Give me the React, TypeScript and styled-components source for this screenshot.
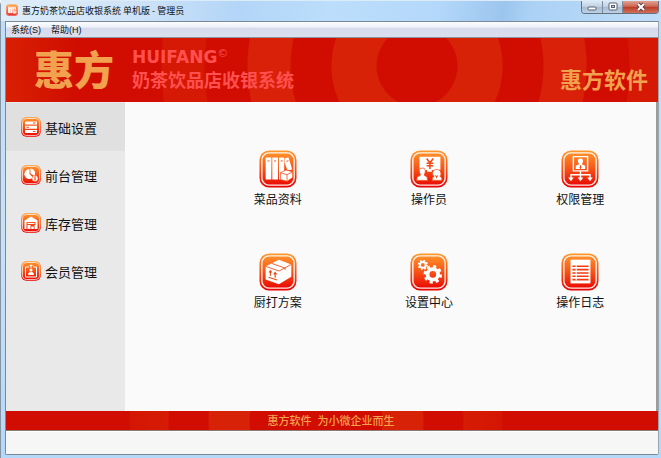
import React, { useId, useState } from "react";
import styled, { createGlobalStyle } from "styled-components";

const GlobalStyle = createGlobalStyle`
  *, *::before, *::after { box-sizing: border-box; }
  body {
    margin: 0;
    font-family: "Liberation Sans", "Noto Sans CJK SC", sans-serif;
    color: #111;
  }
  button { font: inherit; color: inherit; border: 0; padding: 0; background: none; cursor: pointer; }
`;

const Frame = styled.div`
  min-height: 100vh;
  display: flex;
  flex-direction: column;
  padding: 0 2px 3px 4px;
  border-left: 1px solid #8795a3;
  border-radius: 5px 5px 0 0;
  background: linear-gradient(#bcdcfa, #c6e2fb 50%, #b4d8fa);
`;

const TitleBar = styled.header`
  display: flex;
  align-items: flex-start;
  height: 21px;
  margin: 0 -2px 0 -4px;
  padding: 0 2px 0 5px;
  border-top: 1px solid #dcebf8;
  background: linear-gradient(100deg, #dfedf9 0%, #cfe3f7 20%, #b3d5f7 36%, #bcdefc 50%, #b4d8fa 66%, #9cc5ee 76%, #abd1f5 80%, #c0def8 100%);
`;

const Title = styled.h1`
  flex: 1;
  display: flex;
  align-items: center;
  gap: 4px;
  height: 18px;
  margin: 0;
  font-family: "Noto Sans CJK SC", sans-serif;
  font-size: 9px;
  font-weight: 400;
  white-space: pre;
`;

const WindowButtons = styled.div`
  display: flex;
  height: 13px;
  border: 1px solid #66717e;
  border-top: 0;
  border-radius: 0 0 4px 4px;
  overflow: hidden;
`;

const WindowButton = styled.button<{ $close?: boolean }>`
  display: grid;
  place-items: center;
  width: ${(p) => (p.$close ? 36 : 20)}px;
  background: ${(p) =>
    p.$close
      ? "linear-gradient(#e0a294, #cf6753 45%, #bb3c25 50%, #d0705a)"
      : "linear-gradient(#dce8f4, #c3d3e4 45%, #a5bbd1 50%, #bdd2e8)"};
  & + & { border-left: 1px solid #7d8b9a; }
`;

const Client = styled.div`
  flex: 1;
  display: flex;
  flex-direction: column;
  border: 1px solid #7c8894;
  border-right-color: #9aa5b0;
  border-radius: 0 0 2px 2px;
  background: #f5f5f5;
`;

const MenuBar = styled.nav`
  display: flex;
  align-items: center;
  gap: 10px;
  height: 16px;
  padding: 0 5px;
  font-size: 9px;
  line-height: 14px;
  border-bottom: 1px solid #8d939c;
  background: linear-gradient(#fafcff, #eef1f8 35%, #d5daec 40%, #dbe0f0);
`;

const Banner = styled.section`
  display: flex;
  align-items: center;
  height: 64px;
  padding: 0 10px 0 28px;
  background:
    radial-gradient(circle at 411px 28px,
      #d00d00 40px, #d82208 41px, #d82208 85px, #d00d00 86px, #d00d00 126px,
      #d82108 127px, #d82108 169px, #d00d00 170px, #d00d00 212px,
      #d51904 213px, #d51904 255px, #d00d00 256px, #d00d00 340px, #d81f03 410px);
`;

const Brand = styled.div`
  font-family: "Noto Sans CJK SC", sans-serif;
  font-size: 40px;
  line-height: 48px;
  padding-bottom: 4px;
  font-weight: 900;
  color: #f2a14e;
`;

const Product = styled.div`
  flex: 1;
  margin-left: 18px;
  padding-bottom: 2px;
  color: #ff5050;
  white-space: nowrap;
`;

const Latin = styled.div`
  display: flex;
  font: bold 17px/20px "DejaVu Sans", sans-serif;
  small { font-size: 11px; line-height: 14px; font-weight: 400; }
`;

const ProductName = styled.div`
  font: bold 18px/24px "Noto Sans CJK SC", sans-serif;
`;

const Company = styled.div`
  align-self: flex-end;
  padding-bottom: 8px;
  font: bold 22px/32px "Noto Sans CJK SC", sans-serif;
  color: #f2a14e;
  white-space: nowrap;
`;

const Body = styled.div`
  flex: 1;
  display: flex;
  border-right: 2px solid #9c9c9c;
  background: #fafafa;
`;

const Sidebar = styled.nav`
  width: 119px;
  padding-top: 1px;
  background: #e9e9e9;
`;

const SideItem = styled.button<{ $active: boolean }>`
  display: flex;
  align-items: center;
  gap: 4px;
  width: 100%;
  height: 48px;
  padding-left: 15px;
  font-size: 13px;
  background: ${(p) => (p.$active ? "#e0e0e0" : "transparent")};
`;

const Tiles = styled.main`
  flex: 1;
  display: grid;
  grid-template-columns: repeat(3, 1fr);
  grid-auto-rows: 103px;
  padding: 48px 0 0 77px;
`;

const Tile = styled.button`
  display: flex;
  flex-direction: column;
  align-items: center;
  gap: 3px;
  font-size: 12px;
  line-height: 18px;
`;

const Slogan = styled.footer`
  display: flex;
  justify-content: center;
  gap: 6px;
  height: 20px;
  padding-right: 2px;
  font-size: 11px;
  font-weight: 500;
  line-height: 20px;
  color: #f2a14e;
  border-bottom: 1px solid #8a7a76;
  background: radial-gradient(circle at 310px 10px,
    #d00d00 66px, #d82208 67px, #d82208 107px, #d00d00 108px, #d00d00 147px,
    #d61c05 148px, #d41502 186px, #d00d00 187px, #d00d00 360px);
`;

const StatusBar = styled.div`
  height: 23px;
  border-top: 1px solid #fff;
  background: #f6f6f6;
`;

const Glyph = styled.svg`
  display: block;
  flex: none;
`;

function Badge({ size, children }: { size: number; children: React.ReactNode }) {
  const id = useId();
  return (
    <Glyph width={size} height={size} viewBox="0 0 40 40" aria-hidden="true">
      <defs>
        <linearGradient id={id} x1="0" y1="0" x2="0" y2="1">
          <stop offset="0" stopColor="#ff9a2e" />
          <stop offset=".5" stopColor="#f85216" />
          <stop offset="1" stopColor="#e60000" />
        </linearGradient>
      </defs>
      <rect x=".5" y=".5" width="39" height="39" rx="10" fill={`url(#${id})`} />
      <rect x="3" y="3" width="34" height="34" rx="7.5" fill="none" stroke="#fff" strokeWidth="1.5" strokeOpacity=".9" />
      {children}
    </Glyph>
  );
}

const red = "#f04a14";

const drawings: Record<string, React.ReactNode> = {
  books: (
    <g fill="#fff">
      <path d="M7 8h6v23H7zM14 8h6v23h-6zM21 8h5.500v23H21zM27 9l4-1.500 4 13-5 1-3-8z" />
      <path d="M9 11.500h2M16 11.500h2M23 11.500h2M29 12l2-.700" stroke={red} strokeWidth="1" />
      <path d="M22.500 24l6-3 7 2v6l-6 4-7-2z" stroke={red} strokeWidth=".8" />
      <path d="M22.500 24l7 2 6-3M29.500 26v7" fill="none" stroke={red} strokeWidth=".8" />
    </g>
  ),
  operator: (
    <g fill="#fff">
      <path d="M10 7h22v14H10zM18 21h5v2h-5z" />
      <path d="M17.500 9l3.500 4.500L24.500 9M21 13.500V20M17.500 14h7M17.500 16.500h7" fill="none" stroke={red} strokeWidth="1.600" />
      <g stroke={red} strokeWidth=".8">
        <path d="M13 19c-3 0-3.500 2-3 4.500.3 1.200 1 2 1 3L7.500 28.500 7 32h11.500L18 28.500 15 26.500c0-1 .8-2 1-3 .5-2.500 0-4.500-3-4.500z" />
        <path d="M28 20.500c-4 0-4.500 3-4 6l1.500 1-2 2V32h10v-2.500l-2-2 1-1c.5-3-.5-6-4.500-6z" />
      </g>
      <path d="M26 26q2 2 4 0l-2 4z" fill={red} />
    </g>
  ),
  rights: (
    <g fill="none" stroke="#fff" strokeWidth="1.500">
      <path d="M13 7h15v15H13zM20.500 22v9M10.500 30v-4h20v4" />
      <path d="M20.500 9c-2.500 0-3 1.500-2.500 3.500.2 1 1 1.500 1 2.500L15.500 16.500V20h10v-3.500L22 15c0-1 .8-1.500 1-2.500.5-2 0-3.500-2.500-3.500z" fill="#fff" stroke="none" />
      <path d="M7.500 29h6l-3 4zM17.500 29h6l-3 4zM27.500 29h6l-3 4z" fill="#fff" stroke="none" />
      <path d="M20 16l-.5 3 1 1 1-1-.5-3z" fill={red} stroke="none" />
    </g>
  ),
  box: (
    <g>
      <path d="M7 14l14-7 13 5v13l-13 8-14-5z" fill="#fff" />
      <path d="M7 14l14 5 13-7M13.500 11l14 5v2" fill="none" stroke={red} strokeWidth=".9" />
      <path d="M12 24v-5m-1.500 1.500L12 18.500l1.500 2M17 26v-5m-1.500 1.500l1.500-2 1.500 2M10 25.500l9 3" fill="none" stroke={red} strokeWidth="1.200" />
    </g>
  ),
  gears: (
    <g fill="none" stroke="#fff">
      <circle cx="13.500" cy="12.500" r="3" strokeWidth="2" />
      <circle cx="13.500" cy="12.500" r="4.400" strokeWidth="2" strokeDasharray="1.730 1.730" />
      <circle cx="24" cy="22.500" r="5.500" strokeWidth="4" />
      <circle cx="24" cy="22.500" r="8" strokeWidth="3.500" strokeDasharray="3.140 3.140" />
    </g>
  ),
  log: (
    <g>
      <path d="M10 7h21v25H10z" fill="#fff" />
      <path d="M12 14h17M12 17.500h17M12 21h17M12 24.500h17M12 28h17" stroke="#f23c10" strokeWidth="1.700" />
      <path d="M16 13v16" stroke="#fff" strokeWidth="1.200" />
    </g>
  ),
  settings: (
    <g fill="#fff">
      <path d="M8 9h24v6H8zM8 17.500h24v6H8zM8 26h24v6H8z" />
      <path d="M24 12h5M11 20.500h5M24 29h5" stroke={red} strokeWidth="2" />
    </g>
  ),
  front: (
    <g fill="#fff">
      <path d="M17 8a10 10 0 1 0 7 17l-7-7zM19 7v10l8 5c4-7-1-15-8-15z" />
      <circle cx="28" cy="27" r="6" stroke={red} strokeWidth="1" />
      <path d="M30 24.500c-4-2-5 2-2 2.500s2 4-2 2.500M28 23v8" fill="none" stroke={red} strokeWidth="1.300" />
    </g>
  ),
  stock: (
    <g fill="#fff">
      <path d="M7 15l13-8 13 8v17h-4V18H11v14H7z" />
      <path d="M13 20h14v2H13zM13 24h6v8h-6zM20.500 27h5v5h-5zM27 24h3v8h-3z" />
    </g>
  ),
  member: (
    <g fill="none" stroke="#fff" strokeWidth="2">
      <path d="M16 12H9v20h22V12h-7M20 7v7M17 9h6" />
      <circle cx="20" cy="18" r="3" fill="#fff" stroke="none" />
      <path d="M15 27c0-6 10-6 10 0z" fill="#fff" />
    </g>
  ),
};

const sections = [
  ["基础设置", "settings"],
  ["前台管理", "front"],
  ["库存管理", "stock"],
  ["会员管理", "member"],
];

const tiles = [
  ["菜品资料", "books"],
  ["操作员", "operator"],
  ["权限管理", "rights"],
  ["厨打方案", "box"],
  ["设置中心", "gears"],
  ["操作日志", "log"],
];

export default function App() {
  const [active, setActive] = useState("基础设置");
  return (
    <>
      <GlobalStyle />
      <Frame>
        <TitleBar>
          <Title>
            <Badge size={12}>{drawings.books}</Badge>
            惠方奶茶饮品店收银系统 单机版 - 管理员
          </Title>
          <WindowButtons>
            <WindowButton aria-label="最小化">
              <Glyph width="10" height="10" viewBox="0 0 10 10">
                <rect x="1" y="5" width="8" height="3" rx="1" fill="#fff" stroke="#596270" />
              </Glyph>
            </WindowButton>
            <WindowButton aria-label="最大化">
              <Glyph width="10" height="10" viewBox="0 0 10 10">
                <rect x="1" y="1" width="8" height="7" rx="1" fill="#fff" stroke="#596270" />
                <rect x="3.500" y="3.500" width="3" height="2" fill="#b8c9da" stroke="#596270" />
              </Glyph>
            </WindowButton>
            <WindowButton $close aria-label="关闭">
              <Glyph width="10" height="10" viewBox="0 0 10 10">
                <path d="M2 2l6 6M8 2l-6 6" stroke="#5b4048" strokeWidth="4" />
                <path d="M2 2l6 6M8 2l-6 6" stroke="#fff" strokeWidth="2" />
              </Glyph>
            </WindowButton>
          </WindowButtons>
        </TitleBar>
        <Client>
          <MenuBar>
            <button>系统(S)</button>
            <button>帮助(H)</button>
          </MenuBar>
          <Banner>
            <Brand>惠方</Brand>
            <Product>
              <Latin>HUIFANG<small>©</small></Latin>
              <ProductName>奶茶饮品店收银系统</ProductName>
            </Product>
            <Company>惠方软件</Company>
          </Banner>
          <Body>
            <Sidebar>
              {sections.map(([label, icon]) => (
                <SideItem key={label} $active={label === active} onClick={() => setActive(label)}>
                  <Badge size={20}>{drawings[icon]}</Badge>
                  {label}
                </SideItem>
              ))}
            </Sidebar>
            <Tiles>
              {tiles.map(([label, icon]) => (
                <Tile key={label}>
                  <Badge size={38}>{drawings[icon]}</Badge>
                  {label}
                </Tile>
              ))}
            </Tiles>
          </Body>
          <Slogan>
            <span>惠方软件</span>
            <span>为小微企业而生</span>
          </Slogan>
          <StatusBar />
        </Client>
      </Frame>
    </>
  );
}
